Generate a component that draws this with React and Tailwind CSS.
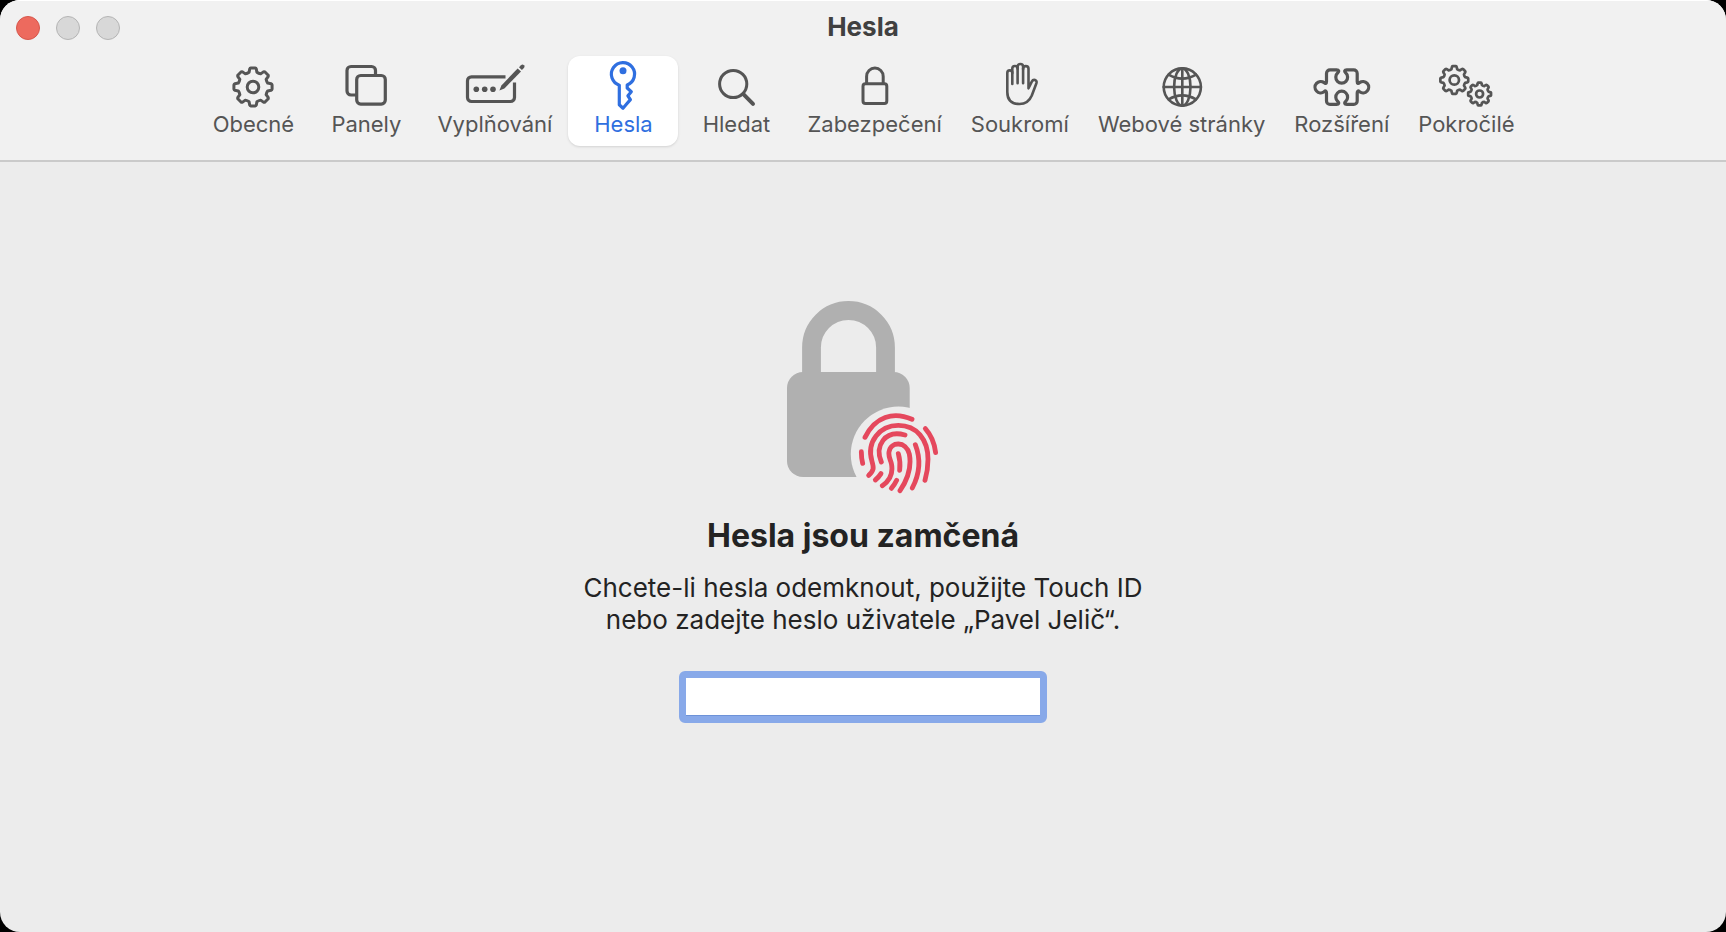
import React from 'react';
import { useState } from 'react';

// Closed outline of a cog wheel centred on (cx, cy)
const gearPath = (cx, cy, outer, inner, teeth = 8) => {
  const step = (Math.PI * 2) / teeth;
  const point = (radius, angle) =>
    `${(cx + radius * Math.sin(angle)).toFixed(2)} ${(cy - radius * Math.cos(angle)).toFixed(2)}`;
  let d = `M${point(inner, -step * 0.33)}`;
  for (let i = 0; i < teeth; i++) {
    const a = i * step;
    d += `L${point(outer - 0.8, a - step * 0.23)}Q${point(outer, a - step * 0.2)} ${point(outer, a - step * 0.14)}`;
    d += `L${point(outer, a + step * 0.14)}Q${point(outer, a + step * 0.2)} ${point(outer - 0.8, a + step * 0.23)}`;
    d += `L${point(inner, a + step * 0.33)}Q${point(inner - 0.6, a + step * 0.5)} ${point(inner, a + step * 0.67)}`;
  }
  return `${d}Z`;
};

const ToolbarIcon = ({ children, strokeWidth = 3 }) => (
  <svg
    className="w-[60px] h-[54px] overflow-visible"
    viewBox="0 0 60 54"
    fill="none"
    stroke="currentColor"
    strokeWidth={strokeWidth}
    strokeLinecap="round"
    strokeLinejoin="round"
    aria-hidden="true"
  >
    {children}
  </svg>
);

const GeneralIcon = () => (
  <ToolbarIcon>
    <path d={gearPath(30, 31, 19.2, 15.2)} />
    <circle cx="30" cy="31" r="5.8" />
  </ToolbarIcon>
);

const TabsIcon = () => (
  <ToolbarIcon strokeWidth={3.2}>
    <path strokeLinecap="butt" d="M39.5 19V14.5a4 4 0 0 0-4-4H15a4 4 0 0 0-4 4V35a4 4 0 0 0 4 4H20" />
    <rect x="20.7" y="19.5" width="28.6" height="28.6" rx="4" />
  </ToolbarIcon>
);

const AutoFillIcon = () => (
  <ToolbarIcon strokeWidth={3.2}>
    <path strokeLinecap="butt" d="M40.5 20.8H6.5a4 4 0 0 0-4 4V41.5a4 4 0 0 0 4 4H45.5a4 4 0 0 0 4-4V26.5" />
    <g fill="currentColor" stroke="none">
      <circle cx="11.3" cy="33.3" r="2.8" />
      <circle cx="19.7" cy="33.3" r="2.8" />
      <circle cx="28" cy="33.3" r="2.8" />
      <path d="M34.4 34.6L36.4 29.4L52.6 12.4L56 15.6L39.4 32.5Z" />
      <path d="M54 11.2L56 9.2a2 2 0 0 1 2.9 2.9L56.9 14.1Z" />
    </g>
  </ToolbarIcon>
);

const PasswordsIcon = () => (
  <ToolbarIcon strokeWidth={3.2}>
    <path d="M26.3 29.2A11.6 11.6 0 1 1 34.2 29V32L38.3 35.7L34.9 39.8L37.4 43.6L33.8 47.8L30 52.2L26.3 48.8Z" />
    <circle cx="30" cy="14.7" r="3.5" fill="currentColor" stroke="none" />
  </ToolbarIcon>
);

const SearchIcon = () => (
  <ToolbarIcon>
    <circle cx="27.2" cy="28" r="13.6" />
    <path strokeWidth="4" d="M37.6 38.4L47 47.8" />
  </ToolbarIcon>
);

const SecurityIcon = () => (
  <ToolbarIcon>
    <rect x="18" y="27.8" width="23.8" height="19.8" rx="2.5" />
    <path d="M21.6 27V20.4a8.3 8.3 0 0 1 16.6 0V27" />
  </ToolbarIcon>
);

const PrivacyIcon = () => (
  <ToolbarIcon strokeWidth={2.6}>
    <path d="M22.3 28V16.9a2.5 2.5 0 0 0-5 0V36c0 8 4.5 12 12.2 12 6.5 0 10-3 12.3-8.5l4.6-12.3c1.1-3.4-3.1-4.6-4.6-1.6L38.5 32.3V12.8a2.7 2.7 0 0 0-5.4 0V27.3" />
    <path d="M22.3 17V12.6a2.65 2.65 0 0 1 5.3 0V27.3" />
    <path d="M27.6 12.6V10.7a2.75 2.75 0 0 1 5.5 0V13" />
  </ToolbarIcon>
);

const WebsitesIcon = () => (
  <ToolbarIcon strokeWidth={2.6}>
    <circle cx="30.3" cy="31" r="18.6" />
    <ellipse cx="30.3" cy="31" rx="8.2" ry="18.6" />
    <path d="M30.3 12.4V49.6M11.7 31H48.9" />
    <path d="M16.6 18.6Q30.3 26.6 44 18.6M16.6 43.4Q30.3 35.4 44 43.4" />
  </ToolbarIcon>
);

const ExtensionsIcon = () => (
  <ToolbarIcon strokeWidth={3.2}>
    <path d="M18 13.9H24.6c2.4 0 2.8 1.4 1.2 2.9A5.9 5.9 0 1 0 33.6 16.8c-1.6-1.5-1.2-2.9 1.2-2.9H41.7a3.5 3.5 0 0 1 3.5 3.5V25.4c0 2.1.9 2.7 2.4 1.2A5.7 5.7 0 1 1 47.6 35.8c-1.5-1.5-2.4-.9-2.4 1.2V44.9a3.5 3.5 0 0 1-3.5 3.5H34.8c-2.4 0-2.8-1.4-1.2-2.9A5.9 5.9 0 1 0 25.8 45.5c1.6 1.5 1.2 2.9-1.2 2.9H18a3.5 3.5 0 0 1-3.5-3.5V37c0-2.1-.9-2.7-2.4-1.2A5.7 5.7 0 1 1 12.1 26.6c1.5 1.5 2.4.9 2.4-1.2V17.4a3.5 3.5 0 0 1 3.5-3.5Z" />
  </ToolbarIcon>
);

const AdvancedIcon = () => (
  <ToolbarIcon strokeWidth={2.7}>
    <path d={gearPath(18.3, 24, 14, 11.2)} />
    <circle cx="18.3" cy="24" r="4.7" />
    <path d={gearPath(43.6, 38, 11.5, 9.2)} />
    <circle cx="43.6" cy="38" r="3.5" />
  </ToolbarIcon>
);

const LockedIcon = () => (
  <svg className="w-[152px] h-[194px]" viewBox="0 0 152 194" fill="none" aria-hidden="true">
    <path d="M24.5 78V47.5a37 37 0 0 1 74 0V78" stroke="#b0b0b0" strokeWidth="18.8" />
    <rect x="0" y="72" width="122.7" height="105" rx="16" fill="#b0b0b0" />
    <circle cx="111.5" cy="154.3" r="47.7" fill="#ececec" />
    {/* Fingerprint ridges */}
    <g transform="translate(63 100) scale(0.3333)" stroke="#e5485d" strokeWidth="14.5" strokeLinecap="round">
      <path d="M45 112C75 50 130 33 186 58" />
      <path d="M56 226C72 212 72 204 66 184C48 125 90 76 145 76C200 76 234 118 234 178C234 200 232 218 225 241" />
      <path d="M94 186C74 138 104 88 165 105" />
      <path d="M97 257C122 240 130 218 124 190C120 176 115 170 117 156C122 124 168 122 178 162C186 205 172 240 150 272" />
      <path d="M145 161Q152 185 149 211" />
      <path d="M196 134C212 175 210 220 187 264" />
      <path d="M226 86Q252 115 257 158" />
      <path d="M34 155Q34 174 38 190" />
      <path d="M93 221Q86 232 76 240" />
      <path d="M140 241Q134 254 124 265" />
    </g>
  </svg>
);

const TABS = [
  { id: 'general', label: 'Obecné', Icon: GeneralIcon },
  { id: 'tabs', label: 'Panely', Icon: TabsIcon },
  { id: 'autofill', label: 'Vyplňování', Icon: AutoFillIcon },
  { id: 'passwords', label: 'Hesla', Icon: PasswordsIcon },
  { id: 'search', label: 'Hledat', Icon: SearchIcon },
  { id: 'security', label: 'Zabezpečení', Icon: SecurityIcon },
  { id: 'privacy', label: 'Soukromí', Icon: PrivacyIcon },
  { id: 'websites', label: 'Webové stránky', Icon: WebsitesIcon },
  { id: 'extensions', label: 'Rozšíření', Icon: ExtensionsIcon },
  { id: 'advanced', label: 'Pokročilé', Icon: AdvancedIcon },
];

const App = () => {
  const [activeTab, setActiveTab] = useState('passwords');
  const [password, setPassword] = useState('');

  return (
    <div className="min-h-screen flex bg-black font-['Inter',sans-serif]">
      <div className="flex-1 flex flex-col rounded-[20px] overflow-hidden bg-[#ececec]">
        {/* Title bar and toolbar */}
        <header className="bg-[#f1f1f1] border-t border-b-2 border-t-white border-b-[#cacaca]">
          <div className="grid grid-cols-[1fr_auto_1fr] items-center h-[54px] px-4">
            <div className="flex gap-4">
              <button type="button" aria-label="Zavřít" className="w-6 h-6 rounded-full bg-[#ed6a5e] border border-[#d6574c]" />
              <button type="button" aria-label="Minimalizovat" disabled className="w-6 h-6 rounded-full bg-[#d8d8d8] border border-[#b4b4b4]" />
              <button type="button" aria-label="Zvětšit" disabled className="w-6 h-6 rounded-full bg-[#d8d8d8] border border-[#b4b4b4]" />
            </div>
            <h1 className="pb-[2px] text-[26px] leading-8 font-bold text-[#404040]">Hesla</h1>
          </div>

          <nav className="flex justify-center gap-[3px] pt-px pb-[14px]">
            {TABS.map(({ id, label, Icon }) => (
              <button
                key={id}
                type="button"
                onClick={() => setActiveTab(id)}
                className={
                  id === activeTab
                    ? 'flex flex-col items-center min-w-[110px] px-[13px] pb-2 rounded-xl bg-white shadow-sm text-[#2f6fe0]'
                    : 'flex flex-col items-center min-w-[110px] px-[13px] pb-2 rounded-xl text-[#555555]'
                }
              >
                <Icon />
                <span className="text-[22px] leading-7 whitespace-nowrap">{label}</span>
              </button>
            ))}
          </nav>
        </header>

        {/* Locked state */}
        <main className="flex-1 flex flex-col items-center pt-[138px] text-[#232323]">
          <LockedIcon />
          <h2 className="mt-[22px] text-[32px] leading-10 font-bold">Hesla jsou zamčená</h2>
          <label htmlFor="password" className="mt-4 text-[26px] leading-8 text-center">
            Chcete-li hesla odemknout, použijte Touch ID
            <br />
            nebo zadejte heslo uživatele „Pavel Jelič“.
          </label>
          <input
            id="password"
            type="password"
            value={password}
            onChange={(e) => setPassword(e.target.value)}
            className="mt-[35px] w-[368px] h-[52px] px-2 text-[26px] bg-white border-[7px] border-[#88a9e9] rounded-md outline-none shadow-[inset_0_-1px_0_#6d92d8]"
          />
        </main>
      </div>
    </div>
  );
};

export default App;
